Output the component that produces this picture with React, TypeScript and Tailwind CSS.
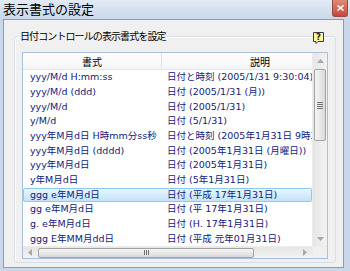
import React from "react";

const rows: [string, string][] = [
  ["yyy/M/d H:mm:ss", "日付と時刻 (2005/1/31 9:30:04)"],
  ["yyy/M/d (ddd)", "日付 (2005/1/31 (月))"],
  ["yyy/M/d", "日付 (2005/1/31)"],
  ["y/M/d", "日付 (5/1/31)"],
  ["yyy年M月d日 H時mm分ss秒", "日付と時刻 (2005年1月31日 9時30分04秒)"],
  ["yyy年M月d日 (dddd)", "日付 (2005年1月31日 (月曜日))"],
  ["yyy年M月d日", "日付 (2005年1月31日)"],
  ["y年M月d日", "日付 (5年1月31日)"],
  ["ggg e年M月d日", "日付 (平成 17年1月31日)"],
  ["gg e年M月d日", "日付 (平 17年1月31日)"],
  ["g. e年M月d日", "日付 (H. 17年1月31日)"],
  ["ggg E年MM月dd日", "日付 (平成 元年01月31日)"],
];

function Tri({ dir }: { dir: "up" | "down" | "left" | "right" }) {
  const pts =
    dir === "up"
      ? "0,4 3.5,0 7,4"
      : dir === "down"
      ? "0,0 7,0 3.5,4"
      : dir === "left"
      ? "4,0 4,7 0,3.5"
      : "0,0 0,7 4,3.5";
  const w = dir === "up" || dir === "down" ? 7 : 4;
  const h = dir === "up" || dir === "down" ? 4 : 7;
  return (
    <svg width={w} height={h} viewBox={`0 0 ${w} ${h}`}>
      <polygon points={pts} fill="#a8a8a8" />
    </svg>
  );
}

export default function App() {
  return (
    <div className="w-[350px] h-[271px] flex flex-col overflow-hidden bg-[#c8d8ea] font-['DejaVu_Sans','Noto_Sans_CJK_JP',sans-serif]">
      {/* Title bar */}
      <div className="h-[19px] shrink-0 flex items-start bg-gradient-to-b from-[#e2ebf6] to-[#c9d8ea]">
        <span className="pl-[3px] pt-[1px] text-[13px] leading-[16px] text-black font-['Noto_Sans_CJK_JP',sans-serif]">
          表示書式の設定
        </span>
        <div className="ml-auto mr-[2px] w-[16px] h-[17px] flex items-center justify-center rounded-b-[3px] border border-t-0 border-[#9a4a3e] bg-gradient-to-b from-[#e08a78] to-[#c4493a]">
          <svg width="7" height="6" viewBox="0 0 7 6">
            <path d="M0.5 0.5 L6.5 5.5 M6.5 0.5 L0.5 5.5" stroke="#ffffff" strokeWidth="1.6" />
          </svg>
        </div>
      </div>
      {/* Frame */}
      <div className="flex-1 min-h-0 flex pl-[3px] pr-[6px] pb-[3px]">
        <div className="flex-1 min-w-0 flex border border-[#8d9bab] bg-[#f0f0f0] pl-[10px] pr-[7px] pt-[16px] pb-[4px]">
          {/* Group box */}
          <div className="relative flex-1 min-w-0 flex flex-col rounded-[3px] border border-[#d5dfe5] shadow-[inset_1px_1px_0_#ffffff] px-[7px] pt-[15px] pb-[3px]">
            <span className="absolute left-[4px] top-[-8px] px-[1px] bg-[#f0f0f0] text-[10px] leading-[14px] tracking-[-0.9px] text-black font-['Noto_Sans_CJK_JP',sans-serif]">
              日付コントロールの表示書式を設定
            </span>
            <div className="absolute right-[11px] top-[-5px] bg-[#f0f0f0]">
              <svg width="11" height="12" viewBox="0 0 11 12">
                <path d="M0.5 0.5 H10.5 V9.5 H5 L3 11.5 V9.5 H0.5 Z" fill="#fff59a" stroke="#3a3a3a" strokeWidth="1" />
                <text x="5.5" y="8" textAnchor="middle" fontSize="8.5" fontWeight="bold" fontFamily="DejaVu Sans, sans-serif" fill="#1a1a1a">?</text>
              </svg>
            </div>
            {/* List view */}
            <div className="flex-1 min-h-0 min-w-0 flex flex-col border border-[#a8c0dc] bg-white">
              <div className="flex-1 min-h-0 min-w-0 flex">
                <div className="flex-1 min-w-0 flex flex-col overflow-hidden">
                  {/* Header */}
                  <div className="h-[17px] shrink-0 flex bg-gradient-to-b from-[#ffffff] to-[#f4f5f7] border-b border-[#e5e8ec] text-[10px] text-black font-['Noto_Sans_CJK_JP',sans-serif]">
                    <div className="w-[139px] shrink-0 flex items-center justify-center border-r border-[#dde2e8]">書式</div>
                    <div className="w-[196px] shrink-0 flex items-center justify-center">説明</div>
                  </div>
                  {/* Rows */}
                  <div className="flex flex-col">
                    {rows.map(([a, b], i) => (
                      <div
                        key={i}
                        className={
                          i === 8
                            ? "h-[14.7px] flex items-center whitespace-nowrap text-[9.5px] text-[#12227c] rounded-[2px] border border-[#8ccaf3] bg-gradient-to-b from-[#e9f5fe] to-[#c3e3fa]"
                            : "h-[14.7px] flex items-center whitespace-nowrap text-[9.5px] text-[#12227c] border border-transparent"
                        }
                      >
                        <div className="w-[138px] shrink-0 pl-[6px] overflow-hidden">{a}</div>
                        <div className="shrink-0 pl-[5px]">{b}</div>
                      </div>
                    ))}
                  </div>
                </div>
                {/* Vertical scrollbar */}
                <div className="w-[15px] shrink-0 flex flex-col bg-gradient-to-r from-[#e6e6e6] to-[#f2f2f2] border-l border-[#ececec]">
                  <div className="h-[15px] flex items-center justify-center">
                    <Tri dir="up" />
                  </div>
                  <div className="flex-1 flex flex-col px-[1px]">
                    <div className="h-[72px] mt-[1px] rounded-[2px] border border-[#a3a3a3] bg-gradient-to-r from-[#f4f4f4] via-[#e9e9e9] to-[#d9d9d9] flex flex-col items-center justify-center gap-[1px]">
                      <div className="w-[6px] h-[1px] bg-[#707070]" />
                      <div className="w-[6px] h-[1px] bg-[#707070]" />
                      <div className="w-[6px] h-[1px] bg-[#707070]" />
                      <div className="w-[6px] h-[1px] bg-[#707070]" />
                    </div>
                  </div>
                  <div className="h-[15px] flex items-center justify-center">
                    <Tri dir="down" />
                  </div>
                </div>
              </div>
              {/* Horizontal scrollbar */}
              <div className="h-[12px] shrink-0 flex">
                <div className="flex-1 min-w-0 flex items-center bg-gradient-to-b from-[#e6e6e6] to-[#f2f2f2] border-t border-[#ececec]">
                  <div className="w-[14px] flex items-center justify-center">
                    <Tri dir="left" />
                  </div>
                  <div className="w-[216px] h-[10px] ml-[1px] rounded-[2px] border border-[#a3a3a3] bg-gradient-to-b from-[#f4f4f4] via-[#e9e9e9] to-[#d9d9d9] flex items-center justify-center gap-[1px]">
                    <div className="w-[1px] h-[5px] bg-[#707070]" />
                    <div className="w-[1px] h-[5px] bg-[#707070]" />
                    <div className="w-[1px] h-[5px] bg-[#707070]" />
                  </div>
                  <div className="flex-1 flex items-center justify-end pr-[5px]">
                    <Tri dir="right" />
                  </div>
                </div>
                <div className="w-[15px] shrink-0 bg-[#f0f0f0] border-t border-l border-[#ececec]" />
              </div>
            </div>
          </div>
        </div>
      </div>
    </div>
  );
}
